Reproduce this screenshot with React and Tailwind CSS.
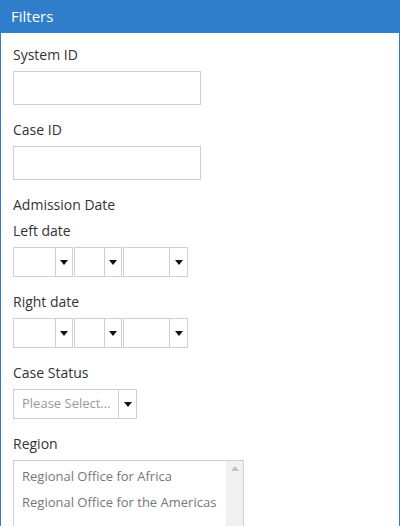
import React from "react";

function Caret() {
  return (
    <svg width="8" height="5" viewBox="0 0 8 5" className="block">
      <path d="M0 0 L8 0 L4 5 Z" fill="#111" />
    </svg>
  );
}

function DropBox({ width, arrow = 17, children }) {
  return (
    <div
      className="flex h-[30px] border border-[#d0d0d0] bg-white"
      style={{ width }}
    >
      <div className="flex flex-1 items-center px-[8px] text-[13px] text-[#999] whitespace-nowrap overflow-hidden">
        {children}
      </div>
      <div
        className="flex items-center justify-center border-l border-[#d0d0d0]"
        style={{ width: arrow }}
      >
        <Caret />
      </div>
    </div>
  );
}

function DateRow() {
  return (
    <div className="flex gap-[1px]">
      <DropBox width={60} />
      <DropBox width={48} />
      <DropBox width={65} arrow={18} />
    </div>
  );
}

function Label({ children, className = "" }) {
  return (
    <div className={"h-[20px] leading-[20px] text-[14px] text-[#333] " + className}>
      {children}
    </div>
  );
}

export default function App() {
  return (
    <div
      className="h-[526px] w-[400px] overflow-hidden border-x border-[#2f7dcb] bg-white"
      style={{ fontFamily: '"Open Sans", "Liberation Sans", sans-serif' }}
    >
      <div className="flex h-[33px] items-center bg-[#2f7dcb] pl-[10px] text-[15px] text-white">
        Filters
      </div>
      <div className="px-[12px] pt-[12px]">
        <Label className="mb-[6px]">System ID</Label>
        <div className="h-[34px] w-[188px] border border-[#d0d0d0]" />

        <Label className="mt-[15px] mb-[6px]">Case ID</Label>
        <div className="h-[34px] w-[188px] border border-[#d0d0d0]" />

        <Label className="mt-[15px]">Admission Date</Label>
        <Label className="mt-[6px] mb-[6px]">Left date</Label>
        <DateRow />

        <Label className="mt-[15px] mb-[6px]">Right date</Label>
        <DateRow />

        <Label className="mt-[15px] mb-[6px]">Case Status</Label>
        <DropBox width={124} arrow={18}>
          Please Select...
        </DropBox>

        <Label className="mt-[15px] mb-[6px]">Region</Label>
        <div className="flex h-[90px] w-[231px] border border-[#d0d0d0]">
          <div className="flex-1 pl-[8px] pt-[2px] text-[13px] text-[#777]">
            <div className="h-[26px] leading-[26px]">Regional Office for Africa</div>
            <div className="h-[26px] leading-[26px]">Regional Office for the Americas</div>
          </div>
          <div className="flex w-[17px] justify-center bg-[#f1f1f1] pt-[5px]">
            <svg width="8" height="5" viewBox="0 0 8 5">
              <path d="M4 0 L8 5 L0 5 Z" fill="#c1c1c1" />
            </svg>
          </div>
        </div>
      </div>
    </div>
  );
}
